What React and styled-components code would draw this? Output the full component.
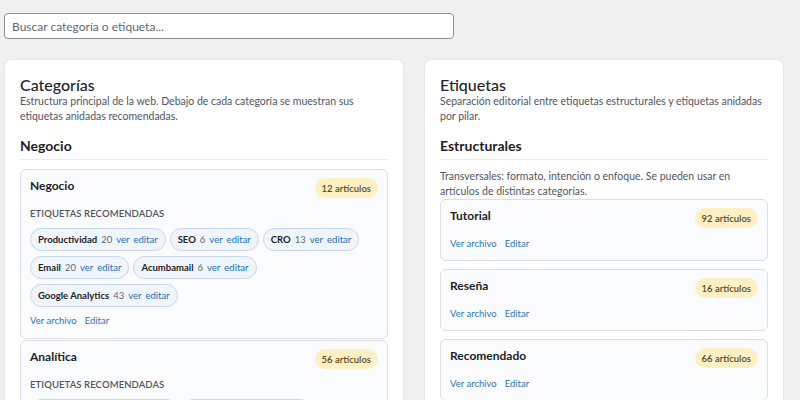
import styled, { createGlobalStyle } from "styled-components";

const GlobalStyle = createGlobalStyle`
  html, body {
    margin: 0;
    padding: 0;
    background: #f0f0f1;
    font-family: "Lato", "Segoe UI", sans-serif;
    color: #1d2327;
  }
  * { box-sizing: border-box; }
`;

const categories = [
  {
    name: "Negocio",
    count: 12,
    tags: [
      { name: "Productividad", count: 20 },
      { name: "SEO", count: 6 },
      { name: "CRO", count: 13 },
      { name: "Email", count: 20 },
      { name: "Acumbamail", count: 6 },
      { name: "Google Analytics", count: 43 },
    ],
  },
  {
    name: "Analítica",
    count: 56,
    tags: [
      { name: "Google Analytics", count: 43 },
      { name: "Looker Studio", count: 9 },
    ],
  },
];

const structural = [
  { name: "Tutorial", count: 92 },
  { name: "Reseña", count: 16 },
  { name: "Recomendado", count: 66 },
];

const App = () => {
  return (
    <>
      <GlobalStyle />
      <Page>
        <Search placeholder="Buscar categoría o etiqueta..." />
        <Columns>
          <Panel>
            <PanelTitle>Categorías</PanelTitle>
            <PanelDesc>
              Estructura principal de la web. Debajo de cada categoría se muestran sus
              etiquetas anidadas recomendadas.
            </PanelDesc>
            <SectionTitle>Negocio</SectionTitle>
            <CardList $gap={1} $top={9}>
              {categories.map((cat) => (
                <Card key={cat.name}>
                  <CardHeader>
                    <CardTitle>{cat.name}</CardTitle>
                    <Badge>{cat.count} artículos</Badge>
                  </CardHeader>
                  <Label>Etiquetas recomendadas</Label>
                  <Chips>
                    {cat.tags.map((t) => (
                      <Chip key={t.name}>
                        <ChipName>{t.name}</ChipName>
                        <ChipCount>{t.count}</ChipCount>
                        <ChipLink>ver</ChipLink>
                        <ChipLink>editar</ChipLink>
                      </Chip>
                    ))}
                  </Chips>
                  <Links>
                    <Link>Ver archivo</Link>
                    <Link>Editar</Link>
                  </Links>
                </Card>
              ))}
            </CardList>
          </Panel>

          <Panel>
            <PanelTitle>Etiquetas</PanelTitle>
            <PanelDesc>
              Separación editorial entre etiquetas estructurales y etiquetas anidadas
              por pilar.
            </PanelDesc>
            <SectionTitle>Estructurales</SectionTitle>
            <SectionNote>
              Transversales: formato, intención o enfoque. Se pueden usar en
              artículos de distintas categorías.
            </SectionNote>
            <CardList $gap={8} $top={0}>
              {structural.map((tag) => (
                <Card key={tag.name} $compact>
                  <CardHeader>
                    <CardTitle>{tag.name}</CardTitle>
                    <Badge>{tag.count} artículos</Badge>
                  </CardHeader>
                  <Links $tight>
                    <Link>Ver archivo</Link>
                    <Link>Editar</Link>
                  </Links>
                </Card>
              ))}
            </CardList>
          </Panel>
        </Columns>
      </Page>
    </>
  );
};

export default App;

const Page = styled.div`
  padding: 13px 16px 0 4px;
  height: 400px;
  overflow: hidden;
`;

const Search = styled.input`
  display: block;
  width: 450px;
  height: 26px;
  padding: 0 7px;
  border: 1px solid #8c8f94;
  border-radius: 4px;
  background: #fff;
  font-family: inherit;
  font-size: 12px;
  color: #2c3338;
  outline: 0;
  &::placeholder {
    color: #646970;
  }
`;

const Columns = styled.div`
  display: grid;
  grid-template-columns: 400px 360px;
  gap: 20px;
  margin-top: 20px;
  align-items: start;
`;

const Panel = styled.section`
  background: #fff;
  border: 1px solid #e6e7e9;
  border-radius: 8px;
  padding: 15px 15px 16px;
`;

const PanelTitle = styled.h2`
  margin: 0;
  font-size: 16px;
  line-height: 19px;
  font-weight: 500;
  color: #1d2327;
`;

const PanelDesc = styled.p`
  margin: 0;
  font-size: 10.5px;
  line-height: 15px;
  color: #50575e;
`;

const SectionTitle = styled.h3`
  margin: 13px 0 0;
  padding-bottom: 4px;
  font-size: 14px;
  line-height: 18px;
  font-weight: 700;
  border-bottom: 1px solid #ebebed;
`;

const SectionNote = styled.p`
  margin: 9px 0 0;
  font-size: 10.5px;
  line-height: 15px;
  color: #50575e;
`;

const CardList = styled.div`
  display: flex;
  flex-direction: column;
  gap: ${(p) => p.$gap}px;
  margin-top: ${(p) => p.$top}px;
`;

const Card = styled.div`
  background: #fafbfc;
  border: 1px solid #dcdde0;
  border-radius: 6px;
  padding: ${(p) => (p.$compact ? "8px 9px 9px" : "8px 9px 10px")};
`;

const CardHeader = styled.div`
  display: flex;
  justify-content: space-between;
  align-items: flex-start;
`;

const CardTitle = styled.h4`
  margin: 0;
  font-size: 12px;
  line-height: 16px;
  font-weight: 700;
  color: #1d2327;
`;

const Badge = styled.span`
  display: inline-flex;
  align-items: center;
  height: 20px;
  padding: 0 7px;
  border-radius: 10px;
  background: #fcf0c4;
  color: #5b4a1c;
  font-size: 9.5px;
  font-weight: 600;
`;

const Label = styled.div`
  margin-top: 9px;
  font-size: 9.5px;
  line-height: 14px;
  font-weight: 600;
  text-transform: uppercase;
  letter-spacing: 0.1px;
  color: #50575e;
`;

const Chips = styled.div`
  display: flex;
  flex-wrap: wrap;
  gap: 5px 4px;
  margin-top: 7px;
`;

const Chip = styled.span`
  display: inline-flex;
  align-items: center;
  gap: 4px;
  height: 23px;
  padding: 0 7px;
  border-radius: 12px;
  background: #f0f5fb;
  border: 1px solid #c8d7e8;
  font-size: 9.5px;
`;

const ChipName = styled.span`
  font-weight: 700;
  color: #1d2327;
`;

const ChipCount = styled.span`
  color: #646970;
`;

const ChipLink = styled.span`
  color: #2271b1;
`;

const Links = styled.div`
  display: flex;
  gap: 8px;
  margin-top: ${(p) => (p.$tight ? 9 : 7)}px;
  font-size: 9.5px;
  line-height: 14px;
`;

const Link = styled.span`
  color: #3474ad;
`;
